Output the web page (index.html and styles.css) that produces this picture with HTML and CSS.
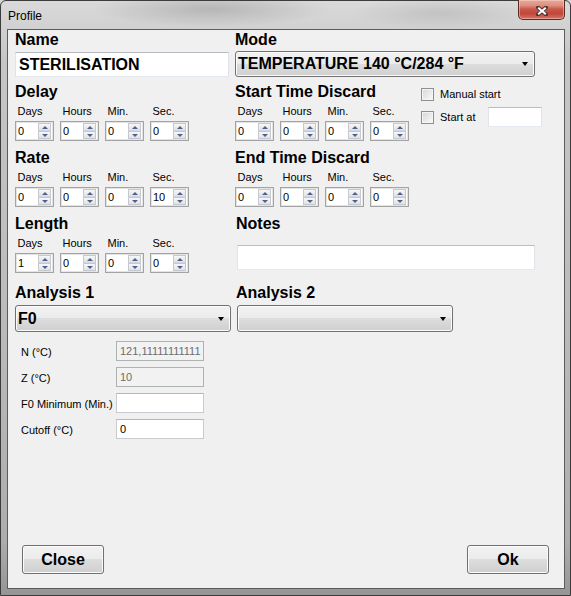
FILE: index.html
```html
<!DOCTYPE html>
<html>
<head>
<meta charset="utf-8">
<title>Profile</title>
<link rel="stylesheet" href="styles.css">
</head>
<body>
<div class="window">
  <div class="titlebar">
    <span class="title">Profile</span>
    <div class="close-x">
      <svg width="12" height="10" viewBox="0 0 12 10">
        <path d="M2 1.5 L10 8.5 M10 1.5 L2 8.5" stroke="#4a3434" stroke-width="3.8" stroke-linecap="round"/>
        <path d="M2.2 1.7 L9.8 8.3 M9.8 1.7 L2.2 8.3" stroke="#ffffff" stroke-width="2"/>
      </svg>
    </div>
  </div>
  <div class="client">
    <div class="row">
      <div class="col-left">
        <div class="h">Name</div>
        <div class="textbox name">STERILISATION</div>
      </div>
      <div class="col-right">
        <div class="h">Mode</div>
        <div class="combo mode"><span class="combo-text">TEMPERATURE 140 °C/284 °F</span><span class="arrow"></span></div>
      </div>
    </div>

    <div class="row gap5">
      <div class="col-left">
        <div class="h">Delay</div>
        <div class="spins">
          <div class="cell"><div class="lbl">Days</div><div class="spin"><span class="val">0</span><span class="btns"><span class="up"></span><span class="dn"></span></span></div></div>
          <div class="cell"><div class="lbl">Hours</div><div class="spin"><span class="val">0</span><span class="btns"><span class="up"></span><span class="dn"></span></span></div></div>
          <div class="cell"><div class="lbl">Min.</div><div class="spin"><span class="val">0</span><span class="btns"><span class="up"></span><span class="dn"></span></span></div></div>
          <div class="cell"><div class="lbl">Sec.</div><div class="spin"><span class="val">0</span><span class="btns"><span class="up"></span><span class="dn"></span></span></div></div>
        </div>
      </div>
      <div class="col-right flexrow">
        <div class="group-start">
          <div class="h">Start Time Discard</div>
          <div class="spins">
            <div class="cell"><div class="lbl">Days</div><div class="spin"><span class="val">0</span><span class="btns"><span class="up"></span><span class="dn"></span></span></div></div>
            <div class="cell"><div class="lbl">Hours</div><div class="spin"><span class="val">0</span><span class="btns"><span class="up"></span><span class="dn"></span></span></div></div>
            <div class="cell"><div class="lbl">Min.</div><div class="spin"><span class="val">0</span><span class="btns"><span class="up"></span><span class="dn"></span></span></div></div>
            <div class="cell"><div class="lbl">Sec.</div><div class="spin"><span class="val">0</span><span class="btns"><span class="up"></span><span class="dn"></span></span></div></div>
          </div>
        </div>
        <div class="checks">
          <div class="chkrow first"><span class="chk"></span><span class="chklbl">Manual start</span></div>
          <div class="chkrow second"><span class="chk"></span><span class="chklbl fixed">Start at</span><span class="textbox startat"></span></div>
        </div>
      </div>
    </div>

    <div class="row gap7">
      <div class="col-left">
        <div class="h">Rate</div>
        <div class="spins">
          <div class="cell"><div class="lbl">Days</div><div class="spin"><span class="val">0</span><span class="btns"><span class="up"></span><span class="dn"></span></span></div></div>
          <div class="cell"><div class="lbl">Hours</div><div class="spin"><span class="val">0</span><span class="btns"><span class="up"></span><span class="dn"></span></span></div></div>
          <div class="cell"><div class="lbl">Min.</div><div class="spin"><span class="val">0</span><span class="btns"><span class="up"></span><span class="dn"></span></span></div></div>
          <div class="cell"><div class="lbl">Sec.</div><div class="spin"><span class="val">10</span><span class="btns"><span class="up"></span><span class="dn"></span></span></div></div>
        </div>
      </div>
      <div class="col-right">
        <div class="h">End Time Discard</div>
        <div class="spins">
          <div class="cell"><div class="lbl">Days</div><div class="spin"><span class="val">0</span><span class="btns"><span class="up"></span><span class="dn"></span></span></div></div>
          <div class="cell"><div class="lbl">Hours</div><div class="spin"><span class="val">0</span><span class="btns"><span class="up"></span><span class="dn"></span></span></div></div>
          <div class="cell"><div class="lbl">Min.</div><div class="spin"><span class="val">0</span><span class="btns"><span class="up"></span><span class="dn"></span></span></div></div>
          <div class="cell"><div class="lbl">Sec.</div><div class="spin"><span class="val">0</span><span class="btns"><span class="up"></span><span class="dn"></span></span></div></div>
        </div>
      </div>
    </div>

    <div class="row gap7">
      <div class="col-left">
        <div class="h">Length</div>
        <div class="spins">
          <div class="cell"><div class="lbl">Days</div><div class="spin"><span class="val">1</span><span class="btns"><span class="up"></span><span class="dn"></span></span></div></div>
          <div class="cell"><div class="lbl">Hours</div><div class="spin"><span class="val">0</span><span class="btns"><span class="up"></span><span class="dn"></span></span></div></div>
          <div class="cell"><div class="lbl">Min.</div><div class="spin"><span class="val">0</span><span class="btns"><span class="up"></span><span class="dn"></span></span></div></div>
          <div class="cell"><div class="lbl">Sec.</div><div class="spin"><span class="val">0</span><span class="btns"><span class="up"></span><span class="dn"></span></span></div></div>
        </div>
      </div>
      <div class="col-right">
        <div class="h shift">Notes</div>
        <div class="textbox notes"></div>
      </div>
    </div>

    <div class="row gap10">
      <div class="col-left">
        <div class="h">Analysis 1</div>
        <div class="combo analysis"><span class="combo-text">F0</span><span class="arrow"></span></div>
      </div>
      <div class="col-right">
        <div class="h shift">Analysis 2</div>
        <div class="combo analysis shifted"><span class="combo-text"></span><span class="arrow"></span></div>
      </div>
    </div>

    <div class="params">
      <div class="prow"><span class="plbl">N (°C)</span><span class="pinput dis">121,11111111111</span></div>
      <div class="prow"><span class="plbl">Z (°C)</span><span class="pinput dis">10</span></div>
      <div class="prow"><span class="plbl">F0 Minimum (Min.)</span><span class="pinput"></span></div>
      <div class="prow"><span class="plbl">Cutoff (°C)</span><span class="pinput">0</span></div>
    </div>

    <div class="buttons">
      <div class="btn">Close</div>
      <div class="btn">Ok</div>
    </div>
  </div>
</div>
</body>
</html>
```

FILE: styles.css
```css
* { box-sizing: border-box; }
html, body { margin: 0; padding: 0; }
body {
  width: 571px;
  height: 596px;
  overflow: hidden;
  background: #d8d8d8;
  font-family: "Liberation Sans", Arial, sans-serif;
  color: #000;
}

.window {
  width: 571px;
  height: 596px;
  display: flex;
  flex-direction: column;
  padding: 0 5px 6px 6px;
  border: 1px solid #3c3c3c;
  border-radius: 6px 6px 0 0;
  background:
    radial-gradient(ellipse 120px 18px at 210px 8px, rgba(120,120,120,0.35), rgba(120,120,120,0) 100%),
    radial-gradient(ellipse 90px 16px at 440px 12px, rgba(150,150,150,0.3), rgba(150,150,150,0) 100%),
    linear-gradient(to bottom, #dadada 0, #d2d2d2 24px, #c6c6c6 60px, #bcbcbc 300px, #adadad 540px, #959595 100%);
}

.titlebar {
  height: 28px;
  flex: none;
  display: flex;
  align-items: flex-start;
}
.title {
  font-size: 12px;
  line-height: 14px;
  padding: 8px 0 0 1px;
}
.close-x {
  margin-left: auto;
  margin-top: -1px;
  width: 47px;
  height: 20px;
  border: 1px solid #5a2a24;
  border-top: none;
  border-radius: 0 0 5px 5px;
  background: linear-gradient(to bottom, #e8ab9c 0%, #dd8d7c 30%, #c9574a 48%, #c0463a 70%, #d47563 100%);
  box-shadow: inset 0 0 0 1px rgba(255,220,210,0.45);
  display: flex;
  align-items: center;
  justify-content: center;
  padding-top: 2px;
}
.close-x svg { display: block; }

.client {
  flex: 1;
  background: #f0f0f0;
  border: 1px solid #5c5c5c;
  padding: 0 7px 14px 7px;
  display: flex;
  flex-direction: column;
}

.row { display: flex; }
.gap5 { margin-top: 5px; }
.gap7 { margin-top: 7px; }
.gap10 { margin-top: 10px; }
.col-left { width: 220px; flex: none; }
.col-right { flex: 1; }
.flexrow { display: flex; }

.h {
  font-size: 16px;
  font-weight: bold;
  line-height: 19px;
  height: 19px;
  white-space: nowrap;
}
.h.shift { padding-left: 1px; }

.textbox {
  display: block;
  background: #fff;
  border: 1px solid #e2e3ea;
  border-top-color: #b9bcc2;
  border-bottom-color: #e3e9ef;
}
.textbox.name {
  margin-top: 3px;
  width: 214px;
  height: 25px;
  font-size: 16px;
  font-weight: bold;
  line-height: 23px;
  padding-left: 3px;
}
.textbox.notes {
  margin-top: 12px;
  margin-left: 2px;
  width: 298px;
  height: 25px;
}
.textbox.startat {
  width: 54px;
  height: 20px;
}

.combo {
  display: flex;
  align-items: center;
  border: 1px solid #707070;
  border-radius: 3px;
  background: linear-gradient(to bottom, #f2f2f2 0%, #ebebeb 49%, #dddddd 50%, #cfcfcf 100%);
  box-shadow: inset 0 0 0 1px #fbfbfb;
  font-size: 16px;
  font-weight: bold;
  padding-left: 2px;
  white-space: nowrap;
}
.combo.mode { margin-top: 2px; width: 300px; height: 26px; }
.combo.analysis { margin-top: 3px; width: 216px; height: 27px; }
.combo.shifted { margin-left: 2px; }
.arrow {
  margin-left: auto;
  margin-right: 6px;
  width: 0;
  height: 0;
  border-left: 3.5px solid transparent;
  border-right: 3.5px solid transparent;
  border-top: 4px solid #000;
}

.spins { display: flex; margin-top: 4px; }
.cell { width: 45px; flex: none; }
.lbl {
  font-size: 11px;
  line-height: 13px;
  height: 13px;
  padding-left: 2.5px;
}
.spin {
  margin-top: 3px;
  width: 39px;
  height: 20px;
  display: flex;
  border: 1px solid #a3a3a3;
  background: #fff;
  box-shadow: inset 0 0 0 1px #e4e4e4;
}
.val {
  flex: 1;
  font-size: 11px;
  line-height: 18px;
  padding-left: 2px;
}
.btns {
  width: 13px;
  flex: none;
  display: flex;
  flex-direction: column;
  margin: 1px 2px 1px 0;
}
.up, .dn {
  flex: 1;
  display: flex;
  align-items: center;
  justify-content: center;
  border: 1px solid #c3c8d1;
  background: linear-gradient(to bottom, #f7f7f7, #e2e2e2);
}
.up { border-bottom-color: #d2d6dc; }
.up::after {
  content: "";
  border-left: 3px solid transparent;
  border-right: 3px solid transparent;
  border-bottom: 3px solid #4f6090;
}
.dn::after {
  content: "";
  border-left: 3px solid transparent;
  border-right: 3px solid transparent;
  border-top: 3px solid #4f6090;
}

.group-start { width: 186px; flex: none; }
.checks { flex: 1; }
.chkrow {
  display: flex;
  align-items: center;
  font-size: 11px;
}
.chkrow.first { margin-top: 4px; height: 16px; }
.chkrow.second { margin-top: 5px; height: 20px; }
.chk {
  width: 13px;
  height: 13px;
  flex: none;
  border: 1px solid #8e8f8f;
  background: linear-gradient(135deg, #d6d6d6, #fbfbfb);
  box-shadow: inset 0 0 0 1px #f4f4f4;
}
.chklbl { margin-left: 6px; white-space: nowrap; }
.chklbl.fixed { width: 48px; flex: none; }

.params { margin-top: 9px; }
.prow {
  display: flex;
  height: 20px;
  margin-bottom: 6px;
}
.plbl {
  width: 101px;
  flex: none;
  font-size: 11px;
  line-height: 18px;
  padding: 2px 0 0 6px;
  white-space: nowrap;
}
.pinput {
  width: 88px;
  height: 20px;
  background: #fff;
  border: 1px solid #c9cbd0;
  border-top-color: #b3b6bc;
  font-size: 11px;
  line-height: 18px;
  padding-left: 3px;
  white-space: nowrap;
  overflow: hidden;
}
.pinput.dis {
  background: #f2f2f2;
  border-color: #adb2b5;
  color: #6d6d6d;
}

.buttons {
  margin-top: auto;
  display: flex;
  justify-content: space-between;
  padding: 0 8px 0 7px;
}
.btn {
  width: 82px;
  height: 29px;
  border: 1px solid #707070;
  border-radius: 3px;
  background: linear-gradient(to bottom, #f2f2f2 0%, #ebebeb 49%, #dddddd 50%, #cfcfcf 100%);
  box-shadow: inset 0 0 0 1px #fbfbfb;
  font-size: 16px;
  font-weight: bold;
  line-height: 27px;
  text-align: center;
}
```
